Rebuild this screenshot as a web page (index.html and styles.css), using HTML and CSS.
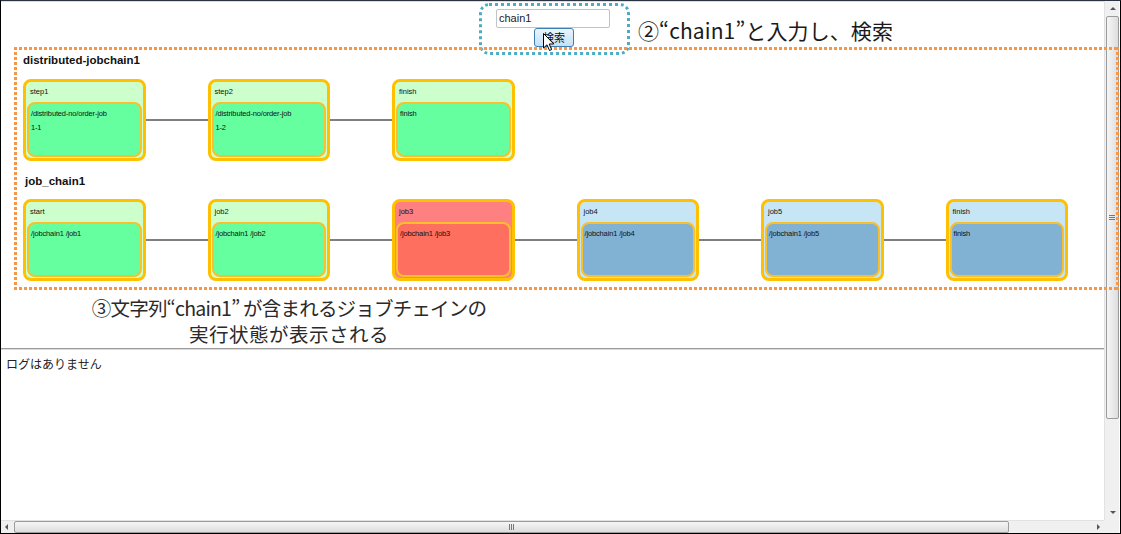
FILE: index.html
```html
<!DOCTYPE html>
<html lang="ja">
<head>
<meta charset="utf-8">
<title>ジョブチェイン検索</title>
<link rel="stylesheet" href="styles.css">
</head>
<body>
<div class="frame">
  <div class="main">
    <div class="search">
      <div class="search-box">
        <div class="input">chain1</div>
        <div class="button">検索</div>
      </div>
    </div>
    <div class="graph">
      <div class="chain-title">distributed-jobchain1</div>
      <div class="chain">
        <div class="node green"><div class="node-head">step1</div><div class="node-body">/distributed-no/order-job<br>1-1</div></div>
        <div class="link"></div>
        <div class="node green"><div class="node-head">step2</div><div class="node-body">/distributed-no/order-job<br>1-2</div></div>
        <div class="link"></div>
        <div class="node green"><div class="node-head">finish</div><div class="node-body">finish</div></div>
      </div>
      <div class="chain-title second">job_chain1</div>
      <div class="chain">
        <div class="node green"><div class="node-head">start</div><div class="node-body">/jobchain1 /job1</div></div>
        <div class="link"></div>
        <div class="node green"><div class="node-head">job2</div><div class="node-body">/jobchain1 /job2</div></div>
        <div class="link"></div>
        <div class="node red"><div class="node-head">job3</div><div class="node-body">/jobchain1 /job3</div></div>
        <div class="link"></div>
        <div class="node blue"><div class="node-head">job4</div><div class="node-body">/jobchain1 /job4</div></div>
        <div class="link"></div>
        <div class="node blue"><div class="node-head">job5</div><div class="node-body">/jobchain1 /job5</div></div>
        <div class="link"></div>
        <div class="node blue"><div class="node-head">finish</div><div class="node-body">finish</div></div>
      </div>
    </div>
    <div class="log">ログはありません</div>
  </div>
  <div class="vscroll">
    <div class="arrow up"></div>
    <div class="vthumb"><span class="grip-h"></span></div>
    <div class="vspace"></div>
    <div class="arrow down"></div>
  </div>
  <div class="hscroll">
    <div class="arrow left"></div>
    <div class="hthumb"><span class="grip-v"></span></div>
    <div class="hspace"></div>
    <div class="arrow right"></div>
  </div>
  <div class="corner"></div>

  <div class="callout-search"></div>
  <div class="callout-graph"></div>
  <div class="note note-search">②“chain1”と入力し、検索</div>
  <div class="note note-graph">
    <div class="note-line first">③文字列“chain1” が含まれるジョブチェインの</div>
    <div class="note-line second">実行状態が表示される</div>
  </div>
  <svg class="cursor" width="12" height="19" viewBox="0 0 12 19"><path d="M0.5 0.5 L0.5 15 L4 11.8 L6.5 17.5 L8.6 16.6 L6.2 11 L10.8 11 Z" fill="#fff" stroke="#000" stroke-width="1" stroke-linejoin="round"/></svg>
</div>
</body>
</html>
```
FILE: styles.css
```css
* { box-sizing: border-box; }
html, body { margin: 0; padding: 0; background: #fff; }
body { font-family: "Liberation Sans", "Noto Sans CJK JP", sans-serif; }

.frame {
  position: relative;
  width: 1121px;
  height: 534px;
  border: 1px solid #000;
  border-top: 1px solid #2b3340;
  display: grid;
  grid-template-columns: 1103px 15px;
  grid-template-rows: 519px 13px;
  overflow: hidden;
}

.main {
  overflow: hidden;
  border-top: 1px solid #d8dee6;
}

.search { height: 45px; padding-top: 7px; }
.search-box {
  margin-left: 495px;
  width: 114px;
  display: flex;
  flex-direction: column;
  align-items: center;
}
.input {
  width: 114px;
  height: 19px;
  border: 1px solid #c3c3c3;
  border-radius: 2px;
  font-size: 11px;
  line-height: 17px;
  padding-left: 2px;
  color: #222;
  font-family: "Liberation Sans", "Noto Sans CJK JP", sans-serif;
}
.button {
  width: 40px;
  height: 19px;
  margin-left: 2px;
  border: 1px solid #3e7fb3;
  border-radius: 3px;
  background: linear-gradient(#eaf5fd, #c4e0f6);
  font-family: "Noto Sans CJK JP", sans-serif;
  font-size: 11px;
  line-height: 16px;
  text-align: center;
  color: #111;
}

.graph {
  padding: 5px 0 66px 22px;
}
.chain-title {
  font-weight: bold;
  font-size: 11.5px;
  line-height: 16px;
  color: #111;
}
.chain-title.second { margin-top: 12px; padding-left: 2px; }
.chain { display: flex; align-items: center; margin-top: 11px; }
.chain-title.second + .chain { margin-top: 10px; }

.node {
  width: 122.5px;
  height: 82px;
  border: 3px solid #ffc000;
  border-radius: 8px;
  padding: 0 1px 1px 1px;
  display: flex;
  flex-direction: column;
  font-size: 7.5px;
  color: #111;
  flex: none;
}
.node-head { height: 20px; line-height: 20px; padding-left: 3px; }
.node-body {
  flex: 1;
  border: 2px solid #f9bf2c;
  border-radius: 8px;
  padding: 3px 0 0 2px;
  line-height: 14px;
  letter-spacing: -0.15px;
}
.link { width: 62px; height: 2px; background: #7f7f7f; flex: none; }

.green { background: #ccffcc; }
.green .node-body { background: #66ff9f; }
.red { background: #ff8080; }
.red .node-body { background: #ff6f60; }
.blue { background: #c6e6f5; }
.blue .node-body { background: #82b2d3; }

.log {
  border-top: 1px solid #9c9c9c;
  box-shadow: inset 0 1px 0 #dcdcdc;
  margin-top: 1px;
  padding: 7px 5px;
  font-family: "Noto Sans CJK JP", sans-serif;
  font-size: 12px;
  line-height: 16px;
  color: #222;
}

/* scrollbars */
.vscroll {
  background: #f0f0f0;
  border-left: 1px solid #e2e2e2;
  display: flex;
  flex-direction: column;
  align-items: center;
}
.vscroll .arrow { width: 13px; height: 15px; flex: none; position: relative; }
.vthumb {
  width: 13px;
  height: 403px;
  border: 1px solid #9b9b9b;
  border-radius: 2px;
  background: linear-gradient(90deg, #f6f6f6, #dddddd);
  display: flex;
  align-items: center;
  justify-content: center;
  flex: none;
}
.grip-h { width: 6px; height: 6px; background: repeating-linear-gradient(#777 0 1px, transparent 1px 2px); }
.vspace { flex: 1; }

.hscroll {
  background: #f0f0f0;
  border-top: 1px solid #e2e2e2;
  display: flex;
  align-items: center;
}
.hscroll .arrow { width: 13px; height: 12px; flex: none; position: relative; }
.hthumb {
  width: 995px;
  height: 12px;
  border: 1px solid #9b9b9b;
  border-radius: 2px;
  background: linear-gradient(#f6f6f6, #dddddd);
  display: flex;
  align-items: center;
  justify-content: center;
  flex: none;
}
.grip-v { width: 6px; height: 6px; background: repeating-linear-gradient(90deg, #777 0 1px, transparent 1px 2px); }
.hspace { flex: 1; }
.corner { background: #f0f0f0; }

.arrow::after { content: ""; position: absolute; width: 0; height: 0; }
.arrow.up::after { left: 4px; top: 6px; border-left: 3px solid transparent; border-right: 3px solid transparent; border-bottom: 3px solid #555; }
.arrow.down::after { left: 4px; top: 6px; border-left: 3px solid transparent; border-right: 3px solid transparent; border-top: 3px solid #555; }
.arrow.left::after { left: 4px; top: 3px; border-top: 3px solid transparent; border-bottom: 3px solid transparent; border-right: 3px solid #555; }
.arrow.right::after { left: 6px; top: 3px; border-top: 3px solid transparent; border-bottom: 3px solid transparent; border-left: 3px solid #555; }

/* annotation overlays */
.callout-search {
  position: absolute;
  left: 478px;
  top: 2px;
  width: 151px;
  height: 52px;
  border: 3px dotted #4bacc6;
  border-radius: 10px;
}
.callout-graph {
  position: absolute;
  left: 13px;
  top: 46px;
  width: 1105px;
  height: 243px;
  background:
    repeating-linear-gradient(90deg, #f79646 0 3px, transparent 3px 5px) left top / 100% 3px no-repeat,
    repeating-linear-gradient(90deg, #f79646 0 3px, transparent 3px 5px) left bottom / 100% 3px no-repeat,
    repeating-linear-gradient(180deg, #f79646 0 3px, transparent 3px 5px) left top / 3px 100% no-repeat,
    repeating-linear-gradient(180deg, #f79646 0 3px, transparent 3px 5px) right top / 3px 100% no-repeat;
}
.note {
  position: absolute;
  font-family: "Noto Sans CJK JP", sans-serif;
  color: #1a1a1a;
}
.note-search {
  left: 637px;
  top: 15px;
  font-size: 21px;
  line-height: 28px;
  letter-spacing: 0.1px;
  white-space: nowrap;
}
.note-graph {
  left: 68px;
  top: 295px;
  width: 440px;
  text-align: center;
  font-size: 19.5px;
  color: #2a2a2a;
  white-space: nowrap;
}
.note-line { height: 26px; line-height: 24px; }
.note-line.first { letter-spacing: -0.8px; }
.note-line.second { letter-spacing: 0.5px; }
.cursor { position: absolute; left: 542px; top: 32px; }
```
